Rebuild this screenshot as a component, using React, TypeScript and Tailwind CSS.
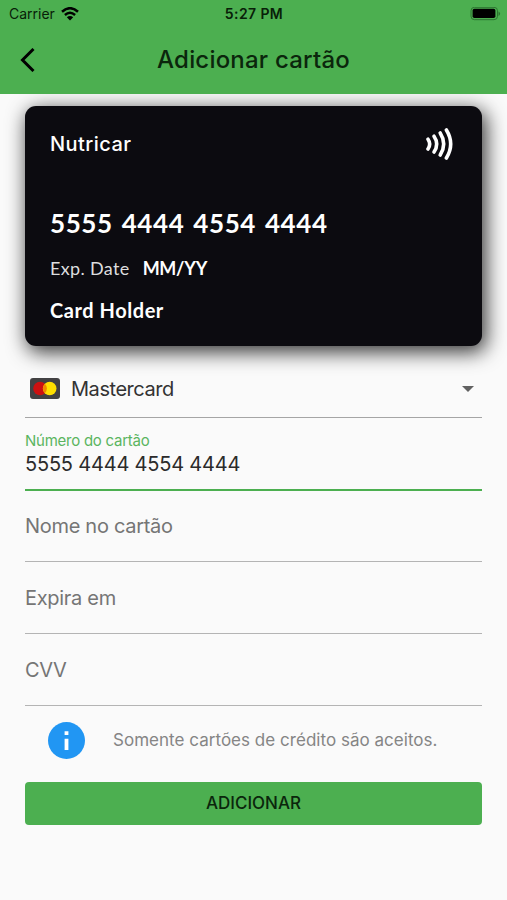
const emptyFields = ["Nome no cartão", "Expira em", "CVV"];

function StatusBar() {
  return (
    <div className="flex h-[27px] items-center justify-between pl-[9px] pr-[6px] text-[14px] text-[#082008]">
      <div className="flex w-[150px] items-center gap-[6px]">
        <span>Carrier</span>
        <svg className="h-[14px] w-[18px] text-black" viewBox="0 0 18 14" fill="none" stroke="currentColor" strokeWidth="2.5">
          <path d="M1 4.8Q9-2.4 17 4.8" />
          <path d="M3.9 8Q9 3.6 14.1 8" />
          <path d="M9 13.5L5.8 10.2Q9 7.6 12.2 10.2Z" fill="currentColor" stroke="none" />
        </svg>
      </div>
      <span className="pr-[2px] text-[14px] font-semibold tracking-[0.4px]">5:27 PM</span>
      <div className="flex w-[150px] justify-end">
        <svg className="h-[14px] w-[31px]" viewBox="0 0 31 14">
          <rect x="1" y="0.3" width="26.5" height="12.4" rx="3.5" fill="none" stroke="#2c7430" strokeWidth="1" />
          <rect x="2.6" y="1.8" width="22.8" height="9.2" rx="1.8" fill="#000" />
          <path d="M28.5 4.5v4.4q1.6-.8 1.6-2.2T28.5 4.5Z" fill="#2c7430" />
        </svg>
      </div>
    </div>
  );
}

function Header() {
  return (
    <header className="relative z-10 h-[94px] bg-[#4caf50]">
      <StatusBar />
      <div className="flex h-[66px] items-center px-[20px]">
        <svg className="h-[24px] w-[16px]" viewBox="0 0 16 24" fill="none" stroke="#000" strokeWidth="3">
          <path d="M13.5 1L2.5 12L13.5 23" />
        </svg>
        <h1 className="flex-1 pr-[16px] text-center text-[24px] font-medium tracking-[0.2px] text-[#0b260c]">Adicionar cartão</h1>
      </div>
    </header>
  );
}

function CreditCard() {
  return (
    <div className="flex h-[240px] flex-col rounded-[11px] bg-[#0c0b10] pl-[25px] pr-[28px] text-white shadow-[3px_5px_20px_1px_rgba(0,0,0,0.8)]">
      <div className="flex h-[76px] items-center justify-between">
        <span className="text-[20px] font-medium tracking-[0.45px]">Nutricar</span>
        <svg className="h-[34px] w-[28px]" viewBox="0 0 28 34" fill="none" stroke="#fff" strokeWidth="3.6" strokeLinecap="round">
          <path d="M2 12.2Q5.4 17 2 22" />
          <path d="M8 9.2Q13.4 17 8 25" />
          <path d="M14.2 6Q21.2 17 14.2 28" />
          <path d="M20.4 3Q29 17 20.4 31" />
        </svg>
      </div>
      <div className="mt-[22px] text-[26px] font-bold leading-[38px] tracking-[0.6px] [word-spacing:2px] font-['Lato',sans-serif]">5555 4444 4554 4444</div>
      <div className="mt-[10px] flex gap-[13px] text-[18px] leading-[32px] font-['Lato',sans-serif]">
        <span className="tracking-[0.35px] text-[#dededf]">Exp. Date</span>
        <span className="font-bold tracking-[-0.3px]">MM/YY</span>
      </div>
      <div className="mt-[10px] text-[20px] font-bold leading-[32px] tracking-[0.55px] font-['Lato',sans-serif]">Card Holder</div>
    </div>
  );
}

export default function App() {
  return (
    <div className="h-[900px] w-[507px] overflow-hidden bg-[#fafafa] font-['Inter',sans-serif]">
      <Header />
      <main className="px-[25px] pt-[12px]">
        <CreditCard />
        <div className="mt-[14px] flex h-[58px] items-center border-b border-[#a5a5a5] pl-[5px] pr-[8px]">
          <svg className="h-[21px] w-[30px]" viewBox="0 0 30 21">
            <rect width="30" height="21" rx="3" fill="#424143" />
            <circle cx="10" cy="10.5" r="6.8" fill="#cc1111" />
            <circle cx="19.7" cy="10.5" r="6.8" fill="#ffdf00" />
            <path d="M14.9 5.7a6.8 6.8 0 0 1 0 9.6a6.8 6.8 0 0 1 0-9.6Z" fill="#f18a00" />
          </svg>
          <span className="ml-[11px] flex-1 text-[20px] tracking-[-0.45px] text-[#333]">Mastercard</span>
          <svg className="h-[6px] w-[12px]" viewBox="0 0 12 6">
            <path d="M0 0h12L6 6Z" fill="#616161" />
          </svg>
        </div>
        <div className="h-[73px] border-b-2 border-[#4caf50] pt-[14px]">
          <div className="text-[15px] leading-[18px] tracking-[-0.25px] text-[#5bb55f]">Número do cartão</div>
          <div className="text-[20px] leading-[28px] tracking-[-0.2px] text-[#2b2b2b]">5555 4444 4554 4444</div>
        </div>
        <div className="-mt-px">
          {emptyFields.map((label) => (
            <div key={label} className="h-[72px] border-b border-[#b4b4b4] pt-[22px] text-[20px] leading-[28px] tracking-[-0.3px] text-[#757575]">
              {label}
            </div>
          ))}
        </div>
        <div className="flex h-[69px] items-center pl-[23px]">
          <svg className="h-[37px] w-[37px]" viewBox="0 0 37 37">
            <circle cx="18.5" cy="18.5" r="18.5" fill="#2196f3" />
            <path d="M16.6 9.3h3.8v3.8h-3.8zM16.6 16.7h3.8v11.3h-3.8z" fill="#fff" />
          </svg>
          <span className="ml-[28px] text-[17px] tracking-[0.03px] text-[#858585]">Somente cartões de crédito são aceitos.</span>
        </div>
        <button className="mt-[7px] h-[43px] w-full rounded-[4px] bg-[#4caf50] text-[17px] font-medium text-[#0b260c]">
          ADICIONAR
        </button>
      </main>
    </div>
  );
}
